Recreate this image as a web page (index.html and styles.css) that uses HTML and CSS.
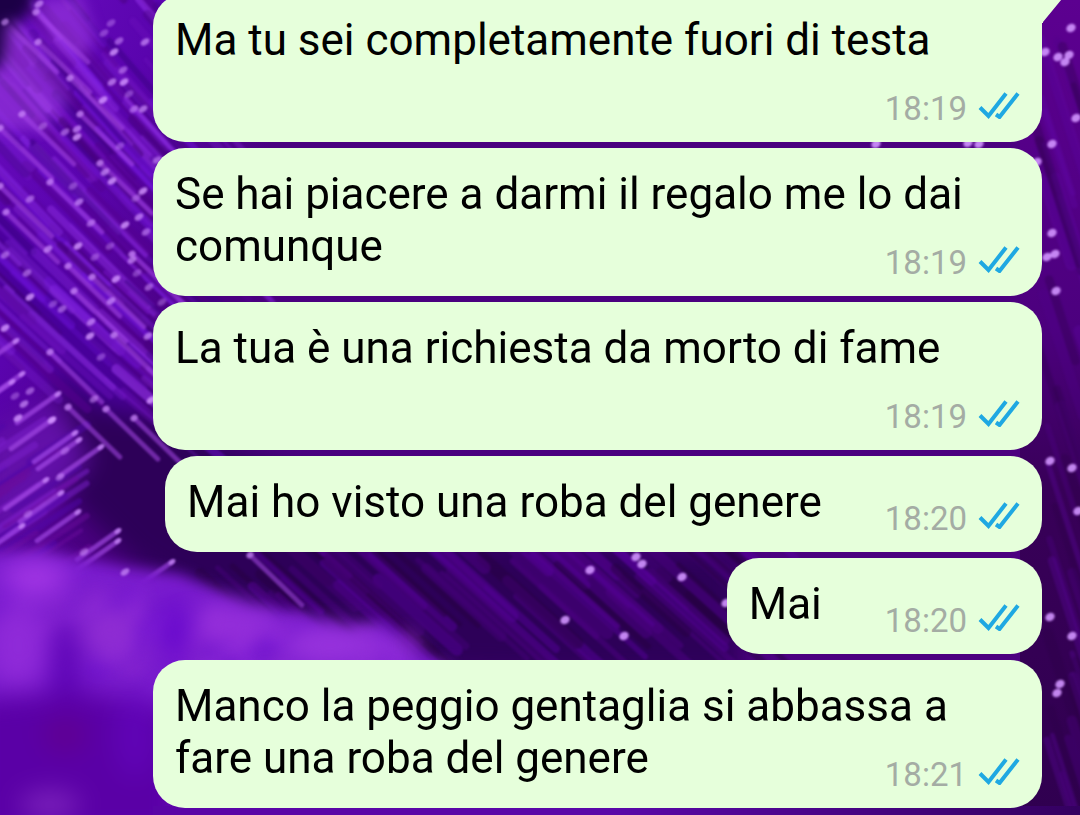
FILE: index.html
```html
<!DOCTYPE html>
<html lang="it">
<head>
<meta charset="utf-8">
<title>Chat</title>
<link rel="stylesheet" href="styles.css">
</head>
<body>
<svg class="wallpaper" viewBox="0 0 1080 815" preserveAspectRatio="xMidYMid slice" aria-hidden="true">
  <defs>
    <linearGradient id="base" x1="0" y1="0" x2="1" y2="0.35">
      <stop offset="0" stop-color="#6a0cc0"/>
      <stop offset="0.14" stop-color="#5a04ae"/>
      <stop offset="0.28" stop-color="#4a0080"/>
      <stop offset="1" stop-color="#4c0080"/>
    </linearGradient>
    <linearGradient id="edge" x1="0" y1="0" x2="0" y2="1">
      <stop offset="0" stop-color="#5c0090"/>
      <stop offset="0.4" stop-color="#4c007e"/>
      <stop offset="0.6" stop-color="#380058"/>
      <stop offset="1" stop-color="#300050"/>
    </linearGradient>
    <linearGradient id="floor" x1="0" y1="0" x2="1" y2="0">
      <stop offset="0" stop-color="#5a04a6"/>
      <stop offset="0.5" stop-color="#5a08a8"/>
      <stop offset="1" stop-color="#340060"/>
    </linearGradient>
    <filter id="soft1" x="-20%" y="-20%" width="140%" height="140%"><feGaussianBlur stdDeviation="1.3"/></filter>
    <filter id="soft6" x="-20%" y="-20%" width="140%" height="140%"><feGaussianBlur stdDeviation="7"/></filter>
    <filter id="soft14" x="-50%" y="-50%" width="200%" height="200%"><feGaussianBlur stdDeviation="13"/></filter>
  </defs>
  <rect width="1080" height="815" fill="url(#base)"/>
  <rect x="1020" width="60" height="815" fill="url(#edge)"/>
  <g filter="url(#soft14)">
    <path d="M60 370L180 430L480 540L740 550L740 680L300 670L130 560L50 480Z" fill="#2d0058"/>
    <path d="M-20 190L100 330L150 420L80 400L-20 260Z" fill="#48009a"/>
    <path d="M-20 440L60 400L90 460L20 540L-20 540Z" fill="#6210a8"/>
  </g>
  <g id="fibres" filter="url(#soft1)" stroke-linecap="round"></g>
  <g filter="url(#soft6)">
    <path d="M-20 -20L40 -20L28 16L12 26L4 64L-20 74Z" fill="#1c0046"/>
    <path d="M4 20L20 26L44 60L70 100L40 130L-20 130L-20 80L2 66Z" fill="#a444e6" opacity=".5"/>
    <path d="M34 2L80 -6L96 40L80 60L56 46Z" fill="#a844ea" opacity=".5"/>
  </g>
  <g filter="url(#soft6)">
    <path d="M-20 553L40 552L90 560L130 568L180 574L222 592L250 605L300 613L350 630L385 622L410 650L450 665L450 830L-20 830Z" fill="#7a1cce"/>
  </g>
  <g id="haze" filter="url(#soft6)"></g>
  <g filter="url(#soft14)">
    <ellipse cx="35" cy="578" rx="34" ry="18" fill="#a236e4"/>
    <ellipse cx="18" cy="645" rx="32" ry="42" fill="#8f2ad8"/>
    <ellipse cx="110" cy="630" rx="28" ry="30" fill="#8e2cd2"/>
    <ellipse cx="230" cy="625" rx="38" ry="20" fill="#952fda"/>
    <ellipse cx="330" cy="645" rx="50" ry="18" fill="#9a35de"/>
    <ellipse cx="175" cy="632" rx="14" ry="34" fill="#6405cc"/>
    <ellipse cx="65" cy="665" rx="14" ry="46" fill="#5b02b4"/>
    <path d="M-30 700L80 690L180 710L180 840L-30 840Z" fill="#5a00a6"/>
    <ellipse cx="65" cy="735" rx="22" ry="18" fill="#600092"/>
    <ellipse cx="135" cy="735" rx="20" ry="44" fill="#6004b6"/>
    <ellipse cx="50" cy="805" rx="30" ry="14" fill="#7c22bc"/>
  </g>
  <rect x="153" y="806" width="927" height="9" fill="url(#floor)"/>
  <g id="tips" filter="url(#soft1)" fill="#d294ff"></g>
</svg>

<main class="chat">
  <p class="bubble bubble-tail">Ma tu sei completamente fuori di testa
    <span class="meta"><time>18:19</time><svg class="ticks" viewBox="0 0 42 28" role="img" aria-label="Letto"><path d="M2 16.5L10.5 25L28 2.5M18 23.5L21.5 26L40 2.5"/></svg></span>
    <svg class="tail" viewBox="0 0 24 29" aria-hidden="true"><path d="M0 0H24L1 28V29H0Z"/></svg>
  </p>
  <p class="bubble">Se hai piacere a darmi il regalo me lo dai comunque
    <span class="meta"><time>18:19</time><svg class="ticks" viewBox="0 0 42 28" role="img" aria-label="Letto"><path d="M2 16.5L10.5 25L28 2.5M18 23.5L21.5 26L40 2.5"/></svg></span>
  </p>
  <p class="bubble">La tua è una richiesta da morto di fame
    <span class="meta"><time>18:19</time><svg class="ticks" viewBox="0 0 42 28" role="img" aria-label="Letto"><path d="M2 16.5L10.5 25L28 2.5M18 23.5L21.5 26L40 2.5"/></svg></span>
  </p>
  <p class="bubble">Mai ho visto una roba del genere
    <span class="meta"><time>18:20</time><svg class="ticks" viewBox="0 0 42 28" role="img" aria-label="Letto"><path d="M2 16.5L10.5 25L28 2.5M18 23.5L21.5 26L40 2.5"/></svg></span>
  </p>
  <p class="bubble">Mai
    <span class="meta"><time>18:20</time><svg class="ticks" viewBox="0 0 42 28" role="img" aria-label="Letto"><path d="M2 16.5L10.5 25L28 2.5M18 23.5L21.5 26L40 2.5"/></svg></span>
  </p>
  <p class="bubble">Manco la peggio gentaglia si abbassa a fare una roba del genere
    <span class="meta"><time>18:21</time><svg class="ticks" viewBox="0 0 42 28" role="img" aria-label="Letto"><path d="M2 16.5L10.5 25L28 2.5M18 23.5L21.5 26L40 2.5"/></svg></span>
  </p>
</main>
<script src="wallpaper.js"></script>
</body>
</html>
```
FILE: styles.css
```css
* {
  box-sizing: border-box;
}

body {
  margin: 0;
  height: 100vh;
  overflow: hidden;
  background: #4a0080;
  font-family: Roboto, "Noto Sans", sans-serif;
}

.wallpaper {
  position: fixed;
  inset: 0;
  z-index: -1;
  width: 100%;
  height: 100%;
  color-interpolation-filters: sRGB;
}

/* The list is anchored to its newest message. */
.chat {
  display: flex;
  flex-direction: column;
  justify-content: flex-end;
  align-items: flex-end;
  gap: 6px;
  height: 100%;
  padding: 0 38px 7px 153px;
}

.bubble {
  position: relative;
  display: flow-root;
  flex: none;
  max-width: 100%;
  margin: 0;
  padding: 20px 22px 14px 22px;
  border-radius: 32px;
  background: #e6ffdb;
  color: #000;
  font-size: 44px;
  line-height: 52px;
}

.bubble-tail {
  border-top-right-radius: 0;
}

.tail {
  position: absolute;
  top: 0;
  left: 100%;
  width: 24px;
  height: 29px;
  fill: #e6ffdb;
}

/* Sits beside the last line when there is room, otherwise below it. */
.meta {
  float: right;
  display: flex;
  align-items: flex-end;
  gap: 11px;
  height: 62px;
  margin-left: 63px;
  color: #a4aca4;
  font-size: 33px;
  line-height: 38px;
}

.ticks {
  width: 42px;
  height: 28px;
  margin-bottom: 9px;
  fill: none;
  stroke: #1fa8e2;
  stroke-width: 4;
}
```
FILE: wallpaper.js
```js
// Draws the glowing fibres and their bright tips on the chat wallpaper.
const NS = "http://www.w3.org/2000/svg";
const fibres = document.getElementById("fibres");
const tips = document.getElementById("tips");
const haze = document.getElementById("haze");

let seed = 11;
function random() {
  seed = (seed * 16807) % 2147483647;
  return seed / 2147483647;
}

function line(x, y, length, degrees, color, width, opacity) {
  const a = degrees * Math.PI / 180;
  const el = document.createElementNS(NS, "line");
  el.setAttribute("x1", x);
  el.setAttribute("y1", y);
  el.setAttribute("x2", x + length * Math.cos(a));
  el.setAttribute("y2", y + length * Math.sin(a));
  el.setAttribute("stroke", color);
  el.setAttribute("stroke-width", width);
  el.setAttribute("opacity", opacity);
  fibres.appendChild(el);
}

function ellipse(parent, x, y, rx, ry, opacity, color) {
  const el = document.createElementNS(NS, "ellipse");
  el.setAttribute("cx", x);
  el.setAttribute("cy", y);
  el.setAttribute("rx", rx);
  el.setAttribute("ry", ry);
  el.setAttribute("opacity", opacity);
  el.setAttribute("transform", `rotate(-35 ${x} ${y})`);
  if (color) el.setAttribute("fill", color);
  parent.appendChild(el);
}

function tip(x, y, rx = 4, ry = 3, opacity = 0.9) {
  ellipse(tips, x, y, rx, ry, opacity);
}

const shades = ["#9434e8", "#7014da", "#3c0084", "#54008e", "#8428dc", "#460078", "#7214c0"];
for (let i = 0; i < 280; i++) {
  const x = -60 + random() * 240;
  const y = -80 + random() * 490;
  if (y > 320 && x < y - 280) continue;
  line(x, y, 50 + random() * 100, 50 - y / 40, shades[i % 7], 3 + random() * 7, 0.25 + random() * 0.35);
}

for (let i = 0; i < 90; i++) {
  line(200 + random() * 520, 470 + random() * 130, 80 + random() * 120, 42,
    ["#5a00a0", "#26003e", "#48007c", "#500088"][i % 4], 4 + random() * 9, 0.45);
}

for (let i = 0; i < 40; i++) {
  line(1035 + random() * 45, random() * 815, 80 + random() * 80, 72,
    ["#6208aa", "#2c0048", "#52008c"][i % 3], 4 + random() * 8, 0.3);
}

for (let i = 0; i < 34; i++) {
  line(-10 + random() * 100, 420 + random() * 130, 60 + random() * 40, 147,
    ["#7c20cc", "#5006a8", "#6a0c9c"][i % 3], 3 + random() * 5, 0.5);
}

// Fibres that rise to the right, ending in a bright tip.
const rising = [
  [16, 341], [22, 374], [58, 394], [52, 420], [75, 433], [79, 440], [101, 447],
  [46, 480], [61, 493], [78, 512], [118, 531], [118, 541], [172, 562], [12, 382], [22, 526]
];
for (const [x, y] of rising) {
  line(x, y, 50, 145, "#a84eea", 5, 0.65);
  tip(x, y, 4, 2, 0.7);
}

// Fibres that fall to the right from a bright tip.
const falling = [
  [5, 22], [36, 12], [38, 42], [70, 78], [22, 114], [80, 114], [50, 182], [6, 212],
  [68, 266], [92, 277], [114, 335], [50, 352], [68, 407], [106, 409], [250, 555],
  [100, 163], [132, 254], [134, 418], [74, 291], [0, 128], [0, 186]
];
for (const [x, y] of falling) {
  line(x, y, 72, 44, "#a84ae8", 5, 0.55);
  tip(x, y, 4, 3, 0.6);
}

const loose = [
  [111, 23], [119, 41], [145, 42], [114, 52], [104, 33], [123, 70], [112, 82], [124, 82],
  [129, 94], [134, 109], [143, 109], [103, 100], [43, 126], [65, 132], [77, 129], [77, 137],
  [120, 146], [157, 160], [105, 172], [112, 181], [73, 186], [30, 199], [79, 202], [143, 191],
  [136, 198], [91, 223], [139, 217], [125, 225], [110, 246], [146, 232], [48, 249], [78, 246],
  [95, 257], [27, 273], [132, 260], [116, 279], [137, 273], [149, 287], [111, 301], [30, 297],
  [53, 304], [62, 309], [91, 322], [90, 336], [101, 357], [94, 399], [148, 336], [151, 400],
  [162, 302], [5, 255], [39, 4], [5, 328], [15, 396], [30, 391], [24, 404], [18, 418],
  [28, 514], [84, 552], [125, 572], [52, 420], [65, 451], [60, 477]
];
loose.forEach(([x, y], i) => tip(x, y, 5, 3, 0.4 + (i % 4) * 0.14));

// Uneven light across the out-of-focus fibres at the bottom left.
for (let i = 0; i < 70; i++) {
  const x = random() * 420;
  const y = 575 + x * 0.16 + random() * 80;
  ellipse(haze, x, y, 10 + random() * 16, 5 + random() * 8, 0.3,
    ["#a43ae4", "#6206cc", "#8e2ad0"][i % 3]);
}

const sparks = [
  [590, 570], [636, 557], [642, 564], [682, 577], [565, 620], [624, 636], [726, 603],
  [1071, 28], [1058, 57], [1065, 62], [1069, 55], [1045, 52], [1076, 118], [1052, 144],
  [1037, 162], [1052, 233], [1047, 257], [1055, 254], [1056, 291], [1050, 461], [1072, 468],
  [1078, 511], [1050, 617], [1072, 636], [1060, 684], [1057, 693], [876, 144], [968, 143], [979, 144]
];
for (const [x, y] of sparks) tip(x, y, 5, 4, 0.9);
```
